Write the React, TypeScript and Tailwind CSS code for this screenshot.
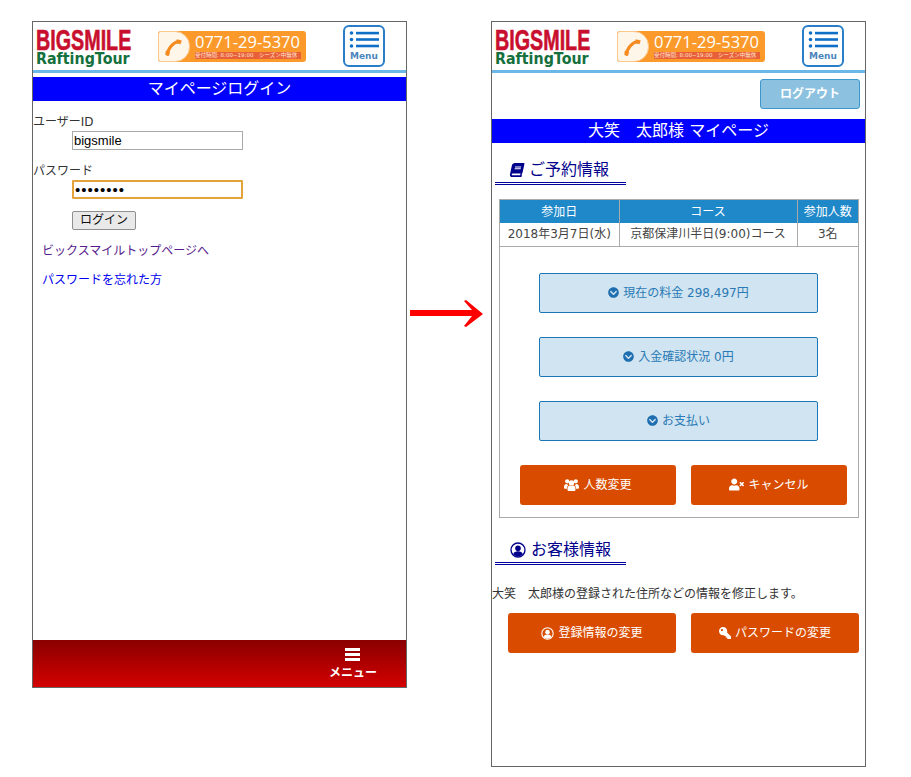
import type { ReactNode } from "react";
import { FaBook, FaChevronCircleDown, FaKey, FaUserTimes } from "react-icons/fa";

const JP = "font-['DejaVu_Sans','Noto_Sans_CJK_JP',sans-serif]";

const SiteHeader = () => (
  <header className="border-b-[3px] border-[#6bb8e8] h-[51px] flex shrink-0">
    {/* logo */}
    <div className="w-[95px] ml-[3px] mt-[6px] font-bold">
      <div className="w-fit font-['Liberation_Sans',sans-serif] text-[29px] leading-[24px] text-[#c8102e] origin-top-left scale-x-[0.68] whitespace-nowrap [-webkit-text-stroke:0.6px_#c8102e]">
        BIGSMILE
      </div>
      <div className="w-fit font-['DejaVu_Sans',sans-serif] text-[15px] leading-[15px] text-[#14703c] origin-top-left scale-x-[0.95] whitespace-nowrap">
        RaftingTour
      </div>
    </div>
    {/* phone */}
    <div className="ml-[27px] mt-[9px] w-[148px] h-[31px] rounded-[3px] bg-[#fb9a2a] flex">
      <div className="w-[32px] h-[31px] bg-[#fff6ea] border border-[#fbc88c] rounded-l-[3px] rounded-r-[15px] flex items-center justify-center">
        <svg viewBox="0 0 24 24" className="w-[22px] h-[22px]" fill="none">
          <path d="M5 20c0-6 6-13 12-14" stroke="#f58a1f" strokeWidth="3.4" strokeLinecap="round" />
          <path d="M15 3.500l5.500 1.500-1.500 4-4-1.200zM3 16l4.500 1-.8 4.500-4.200-1z" fill="#f58a1f" />
        </svg>
      </div>
      <div className="flex-1 pl-[5px] text-white font-['Open_Sans',sans-serif]">
        <div className="text-[16.500px] leading-[20px] mt-[1px] whitespace-nowrap">0771-29-5370</div>
        <div className={`${JP} w-[106px] h-[7px] bg-[#e8603a] text-[5.500px] leading-[7px] whitespace-nowrap overflow-hidden text-[#ffe3d0]`}>
          受付時間: 8:00~19:00　シーズン中無休
        </div>
      </div>
    </div>
    {/* menu */}
    <div className="ml-[37px] mt-[3px] w-[42px] h-[42px] border-2 border-[#2a7ec8] rounded-[6px] flex flex-col items-center">
      <svg viewBox="0 0 30 19" className="w-[30px] h-[19px] mt-[3px]" fill="#0f6fc6">
        <circle cx="2.500" cy="3" r="1.800" />
        <circle cx="2.500" cy="9.500" r="1.800" />
        <circle cx="2.500" cy="16" r="1.800" />
        <rect x="7" y="1.800" width="23" height="2.600" />
        <rect x="7" y="8.200" width="23" height="2.600" />
        <rect x="7" y="14.700" width="23" height="2.600" />
      </svg>
      <div className="font-['DejaVu_Sans',sans-serif] font-bold text-[9px] leading-[12px] mt-[1px] text-[#4a86bd]">Menu</div>
    </div>
  </header>
);

const UserRing = ({ size }: { size: string }) => (
  <svg viewBox="0 0 24 24" className={size} fill="currentColor">
    <circle cx="12" cy="12" r="10.500" fill="none" stroke="currentColor" strokeWidth="2" />
    <circle cx="12" cy="9.500" r="4.200" />
    <path d="M4.800 18.500c1-3.300 3.500-4.500 7.200-4.500s6.200 1.200 7.200 4.500c-1.800 2-4.300 3.200-7.200 3.200s-5.400-1.200-7.200-3.200z" />
  </svg>
);

const UsersIcon = () => (
  <svg viewBox="0 0 28 24" className="w-[15px] h-[13px]" fill="currentColor">
    <circle cx="6" cy="6" r="4" />
    <circle cx="22" cy="6" r="4" />
    <circle cx="14" cy="9" r="5" />
    <path d="M0 17c0-4 2-6 5-6 1 1 2 2 3 2-1.500 1.500-2.200 4-2.200 7H2c-1.300 0-2-1-2-3zM28 17c0-4-2-6-5-6-1 1-2 2-3 2 1.500 1.500 2.200 4 2.200 7H26c1.300 0 2-1 2-3z" />
    <path d="M8 24c-1 0-1.500-1-1.500-2.500 0-4.500 2-7.500 4.500-7.500 1 1 5 1 6 0 2.500 0 4.500 3 4.500 7.500 0 1.500-.5 2.500-1.500 2.500z" />
  </svg>
);

const Band = ({ children }: { children: ReactNode }) => (
  <div className="h-6 bg-[#0000ff] text-white text-center text-[16px] leading-6">{children}</div>
);

const SectionTitle = ({ icon, title }: { icon: ReactNode; title: string }) => (
  <div className="ml-[3px] w-[131px] h-[28px] border-b-[3px] border-double border-[#00009c] pl-[15px] flex items-center gap-[5px] text-[16px] leading-[24px] text-[#00008b]">
    {icon}
    <span>{title}</span>
  </div>
);

const InfoButton = ({ label }: { label: string }) => (
  <button className="w-[279px] h-10 bg-[#d0e4f1] border border-[#1a76b4] rounded-[2px] text-[#2a7ab5] text-[12px] flex items-center justify-center gap-[4px]">
    <FaChevronCircleDown className="text-[11px] text-[#1f6eb0]" />
    {label}
  </button>
);

const OrangeButton = ({ icon, label, width }: { icon: ReactNode; label: string; width: string }) => (
  <button className={`${width} h-10 bg-[#d94c00] rounded-[3px] text-white text-[12px] flex items-center justify-center gap-[4px]`}>
    {icon}
    {label}
  </button>
);

const LoginScreen = () => (
  <div className="w-[375px] h-[667px] border border-[#666] flex flex-col bg-white shrink-0">
    <SiteHeader />
    <div className="mt-1">
      <Band>マイページログイン</Band>
    </div>
    <div className="text-[12px] leading-[17px] text-[#333] flex-1">
      <div className="mt-[13px]">ユーザーID</div>
      <input
        readOnly
        value="bigsmile"
        className="block ml-[39px] w-[171px] h-[19px] border border-[#a9a9a9] px-[1px] font-['Liberation_Sans',sans-serif] text-[13px] text-black outline-none"
      />
      <div className="mt-[13px]">パスワード</div>
      <input
        readOnly
        type="password"
        value="bigsmile"
        className="block ml-[39px] w-[171px] h-[19px] border-2 border-[#e5a33c] rounded-[1px] px-[1px] font-['Liberation_Sans',sans-serif] text-[15px] tracking-[1px] text-black outline-none"
      />
      <button className="block ml-[39px] mt-3 w-[64px] h-[19px] border border-[#8f8f8f] rounded-[2px] bg-[#e9e9e9] text-[12px] leading-[15px] text-[#111]">
        ログイン
      </button>
      <div className="ml-[9px] mt-[13px] text-[#551a8b]">ビックスマイルトップページへ</div>
      <div className="ml-[9px] mt-3 text-[#0000ee]">パスワードを忘れた方</div>
    </div>
    <footer className="h-[47px] bg-gradient-to-b from-[#8b0000] to-[#d40000] flex justify-end pr-[29px] shrink-0">
      <div className="flex flex-col items-center text-white font-bold">
        <svg viewBox="0 0 15 13" className="w-[15px] h-[13px] mt-2" fill="currentColor">
          <rect width="15" height="3" />
          <rect y="5" width="15" height="3" />
          <rect y="10" width="15" height="3" />
        </svg>
        <div className="text-[12px] leading-[14px] mt-[5px]">メニュー</div>
      </div>
    </footer>
  </div>
);

const MyPage = () => (
  <div className="w-[375px] h-[746px] border border-[#666] bg-white shrink-0">
    <SiteHeader />
    <div className="flex justify-end pr-[5px] pt-[6px] pb-[10px]">
      <button className="w-[100px] h-[30px] bg-[#8cc2df] border border-[#3d97cf] rounded-[3px] text-white font-bold text-[12px]">
        ログアウト
      </button>
    </div>
    <Band>大笑　太郎様 マイページ</Band>
    <div className="mt-[14px]">
      <SectionTitle icon={<FaBook className="text-[14px] -skew-x-12" />} title="ご予約情報" />
    </div>
    <div className="ml-[7px] mt-[14px] w-[360px] border border-[#aaa] h-[319px]">
      <table className="w-full table-fixed border-collapse text-[12px] text-center leading-[22px]">
        <colgroup>
          <col className="w-[119px]" />
          <col className="w-[178px]" />
          <col />
        </colgroup>
        <thead>
          <tr className="bg-[#1e88c9] text-white h-[23px]">
            <th className="font-normal border-r border-[#aaa]">参加日</th>
            <th className="font-normal border-r border-[#aaa]">コース</th>
            <th className="font-normal">参加人数</th>
          </tr>
        </thead>
        <tbody>
          <tr className="text-[#444] h-[23px] border-b border-[#aaa]">
            <td className="border-r border-[#aaa] whitespace-nowrap">2018年3月7日(水)</td>
            <td className="border-r border-[#aaa] whitespace-nowrap">京都保津川半日(9:00)コース</td>
            <td>3名</td>
          </tr>
        </tbody>
      </table>
      <div className="flex flex-col gap-6 ml-[39px] mt-[26px]">
        <InfoButton label="現在の料金 298,497円" />
        <InfoButton label="入金確認状況 0円" />
        <InfoButton label="お支払い" />
      </div>
      <div className="flex gap-[15px] ml-5 mt-6">
        <OrangeButton width="w-[156px]" icon={<UsersIcon />} label="人数変更" />
        <OrangeButton width="w-[156px]" icon={<FaUserTimes className="text-[15px]" />} label="キャンセル" />
      </div>
    </div>
    <div className="mt-[19px]">
      <SectionTitle icon={<UserRing size="w-4 h-4" />} title="お客様情報" />
    </div>
    <p className="mt-5 text-[12px] leading-[18px] text-[#333] whitespace-nowrap">
      大笑　太郎様の登録された住所などの情報を修正します。
    </p>
    <div className="flex gap-[15px] ml-4 mt-[10px]">
      <OrangeButton width="w-[168px]" icon={<UserRing size="w-[13px] h-[13px]" />} label="登録情報の変更" />
      <OrangeButton width="w-[168px]" icon={<FaKey className="text-[12px] -scale-x-100" />} label="パスワードの変更" />
    </div>
  </div>
);

export default function App() {
  return (
    <div className={`${JP} w-[911px] h-[777px] overflow-hidden bg-white pl-8 pt-[21px] flex items-start`}>
      <LoginScreen />
      <svg viewBox="0 0 84 40" className="w-[84px] h-10 mt-[274px] shrink-0">
        <path d="M3 15H65L57 6 59 5 76 19 59 32 57 31 65 21H3z" fill="#ff0000" />
      </svg>
      <MyPage />
    </div>
  );
}
